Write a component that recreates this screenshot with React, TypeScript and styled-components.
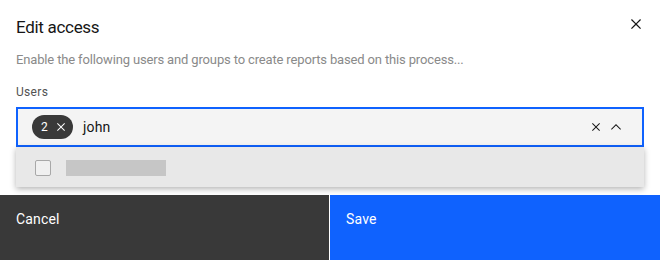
import React from "react";
import styled, { createGlobalStyle } from "styled-components";

const GlobalStyle = createGlobalStyle`
  html, body {
    margin: 0;
    padding: 0;
    background: #ffffff;
  }
  body {
    font-family: Roboto, "Liberation Sans", Arial, sans-serif;
    color: #161616;
  }
  * {
    box-sizing: border-box;
  }
`;

const CLOSE_PATH =
  "M24 9.4L22.6 8 16 14.6 9.4 8 8 9.4 14.6 16 8 22.6 9.4 24 16 17.4 22.6 24 24 22.6 17.4 16 24 9.4z";
const CHEVRON_UP_PATH = "M16 10L26 20 24.6 21.4 16 12.8 7.4 21.4 6 20z";

interface IconProps {
  size?: number;
  d: string;
}

function Icon({ size = 16, d }: IconProps) {
  return (
    <svg width={size} height={size} viewBox="0 0 32 32" fill="currentColor" aria-hidden="true">
      <path d={d} />
    </svg>
  );
}

function App() {
  return (
    <>
      <GlobalStyle />
      <Modal>
        <Header>
          <Title>Edit access</Title>
          <CloseButton aria-label="Close">
            <Icon size={20} d={CLOSE_PATH} />
          </CloseButton>
        </Header>

        <Body>
          <Description>
            Enable the following users and groups to create reports based on this process...
          </Description>
          <Label>Users</Label>

          <ComboBox>
            <Field>
              <FilterTag>
                <span>2</span>
                <Icon d={CLOSE_PATH} />
              </FilterTag>
              <Query>john</Query>
              <FieldIcon>
                <Icon d={CLOSE_PATH} />
              </FieldIcon>
              <FieldIcon>
                <Icon d={CHEVRON_UP_PATH} />
              </FieldIcon>
            </Field>

            <Menu>
              <MenuItem>
                <Checkbox />
                <Skeleton />
              </MenuItem>
            </Menu>
          </ComboBox>
        </Body>

        <Footer>
          <FooterButton $kind="secondary">Cancel</FooterButton>
          <FooterButton $kind="primary">Save</FooterButton>
        </Footer>
      </Modal>
    </>
  );
}

const Modal = styled.div`
  width: 660px;
  height: 260px;
  display: flex;
  flex-direction: column;
  background: #ffffff;
`;

const Header = styled.div`
  position: relative;
  padding: 15px 16px 0;
`;

const Title = styled.h2`
  margin: 0;
  font-size: 17px;
  font-weight: 400;
  line-height: 24px;
  letter-spacing: -0.3px;
  color: #161616;
`;

const CloseButton = styled.button`
  position: absolute;
  top: 0;
  right: 0;
  width: 48px;
  height: 48px;
  display: flex;
  align-items: center;
  justify-content: center;
  padding: 0;
  border: none;
  background: transparent;
  color: #161616;
`;

const Body = styled.div`
  padding: 12px 16px 0;
`;

const Description = styled.p`
  margin: 0;
  font-size: 13px;
  line-height: 18px;
  letter-spacing: -0.15px;
  color: #8a8a8a;
`;

const Label = styled.div`
  margin-top: 15px;
  margin-bottom: 7px;
  font-size: 12px;
  line-height: 16px;
  letter-spacing: 0.32px;
  color: #525252;
`;

const ComboBox = styled.div`
  position: relative;
`;

const Field = styled.div`
  height: 40px;
  display: flex;
  align-items: center;
  padding: 0 18px 0 14px;
  background: #f4f4f4;
  border: 2px solid #0f62fe;
`;

const FilterTag = styled.div`
  height: 24px;
  display: inline-flex;
  align-items: center;
  gap: 5px;
  padding: 0 4px 0 9px;
  border-radius: 12px;
  background: #393939;
  color: #ffffff;
  font-size: 12px;
  letter-spacing: 0.32px;
`;

const Query = styled.span`
  flex: 1;
  margin-left: 10px;
  font-size: 14px;
  letter-spacing: 0.16px;
  color: #161616;
`;

const FieldIcon = styled.span`
  display: flex;
  width: 16px;
  height: 16px;
  margin-left: 4px;
  color: #161616;
`;

const Menu = styled.div`
  position: absolute;
  top: 100%;
  left: 0;
  right: 0;
  background: #e8e8e8;
  box-shadow: 0 2px 6px rgba(0, 0, 0, 0.3);
`;

const MenuItem = styled.div`
  height: 40px;
  display: flex;
  align-items: center;
  gap: 15px;
  padding: 1px 0 0 19px;
`;

const Checkbox = styled.span`
  width: 16px;
  height: 16px;
  border: 1px solid #a8a8a8;
  border-radius: 2px;
  background: #f0f0f0;
`;

const Skeleton = styled.span`
  width: 100px;
  height: 16px;
  background: #c6c6c6;
`;

const Footer = styled.div`
  margin-top: auto;
  height: 65px;
  display: grid;
  grid-template-columns: 329px 1fr;
  gap: 1px;
`;

const FooterButton = styled.button<{ $kind: "primary" | "secondary" }>`
  display: flex;
  align-items: flex-start;
  padding: 15px 16px 0;
  border: none;
  font-family: inherit;
  font-size: 14px;
  line-height: 18px;
  letter-spacing: 0.16px;
  text-align: left;
  color: #ffffff;
  background: ${(p) => (p.$kind === "primary" ? "#0f62fe" : "#393939")};
`;

export default App;
